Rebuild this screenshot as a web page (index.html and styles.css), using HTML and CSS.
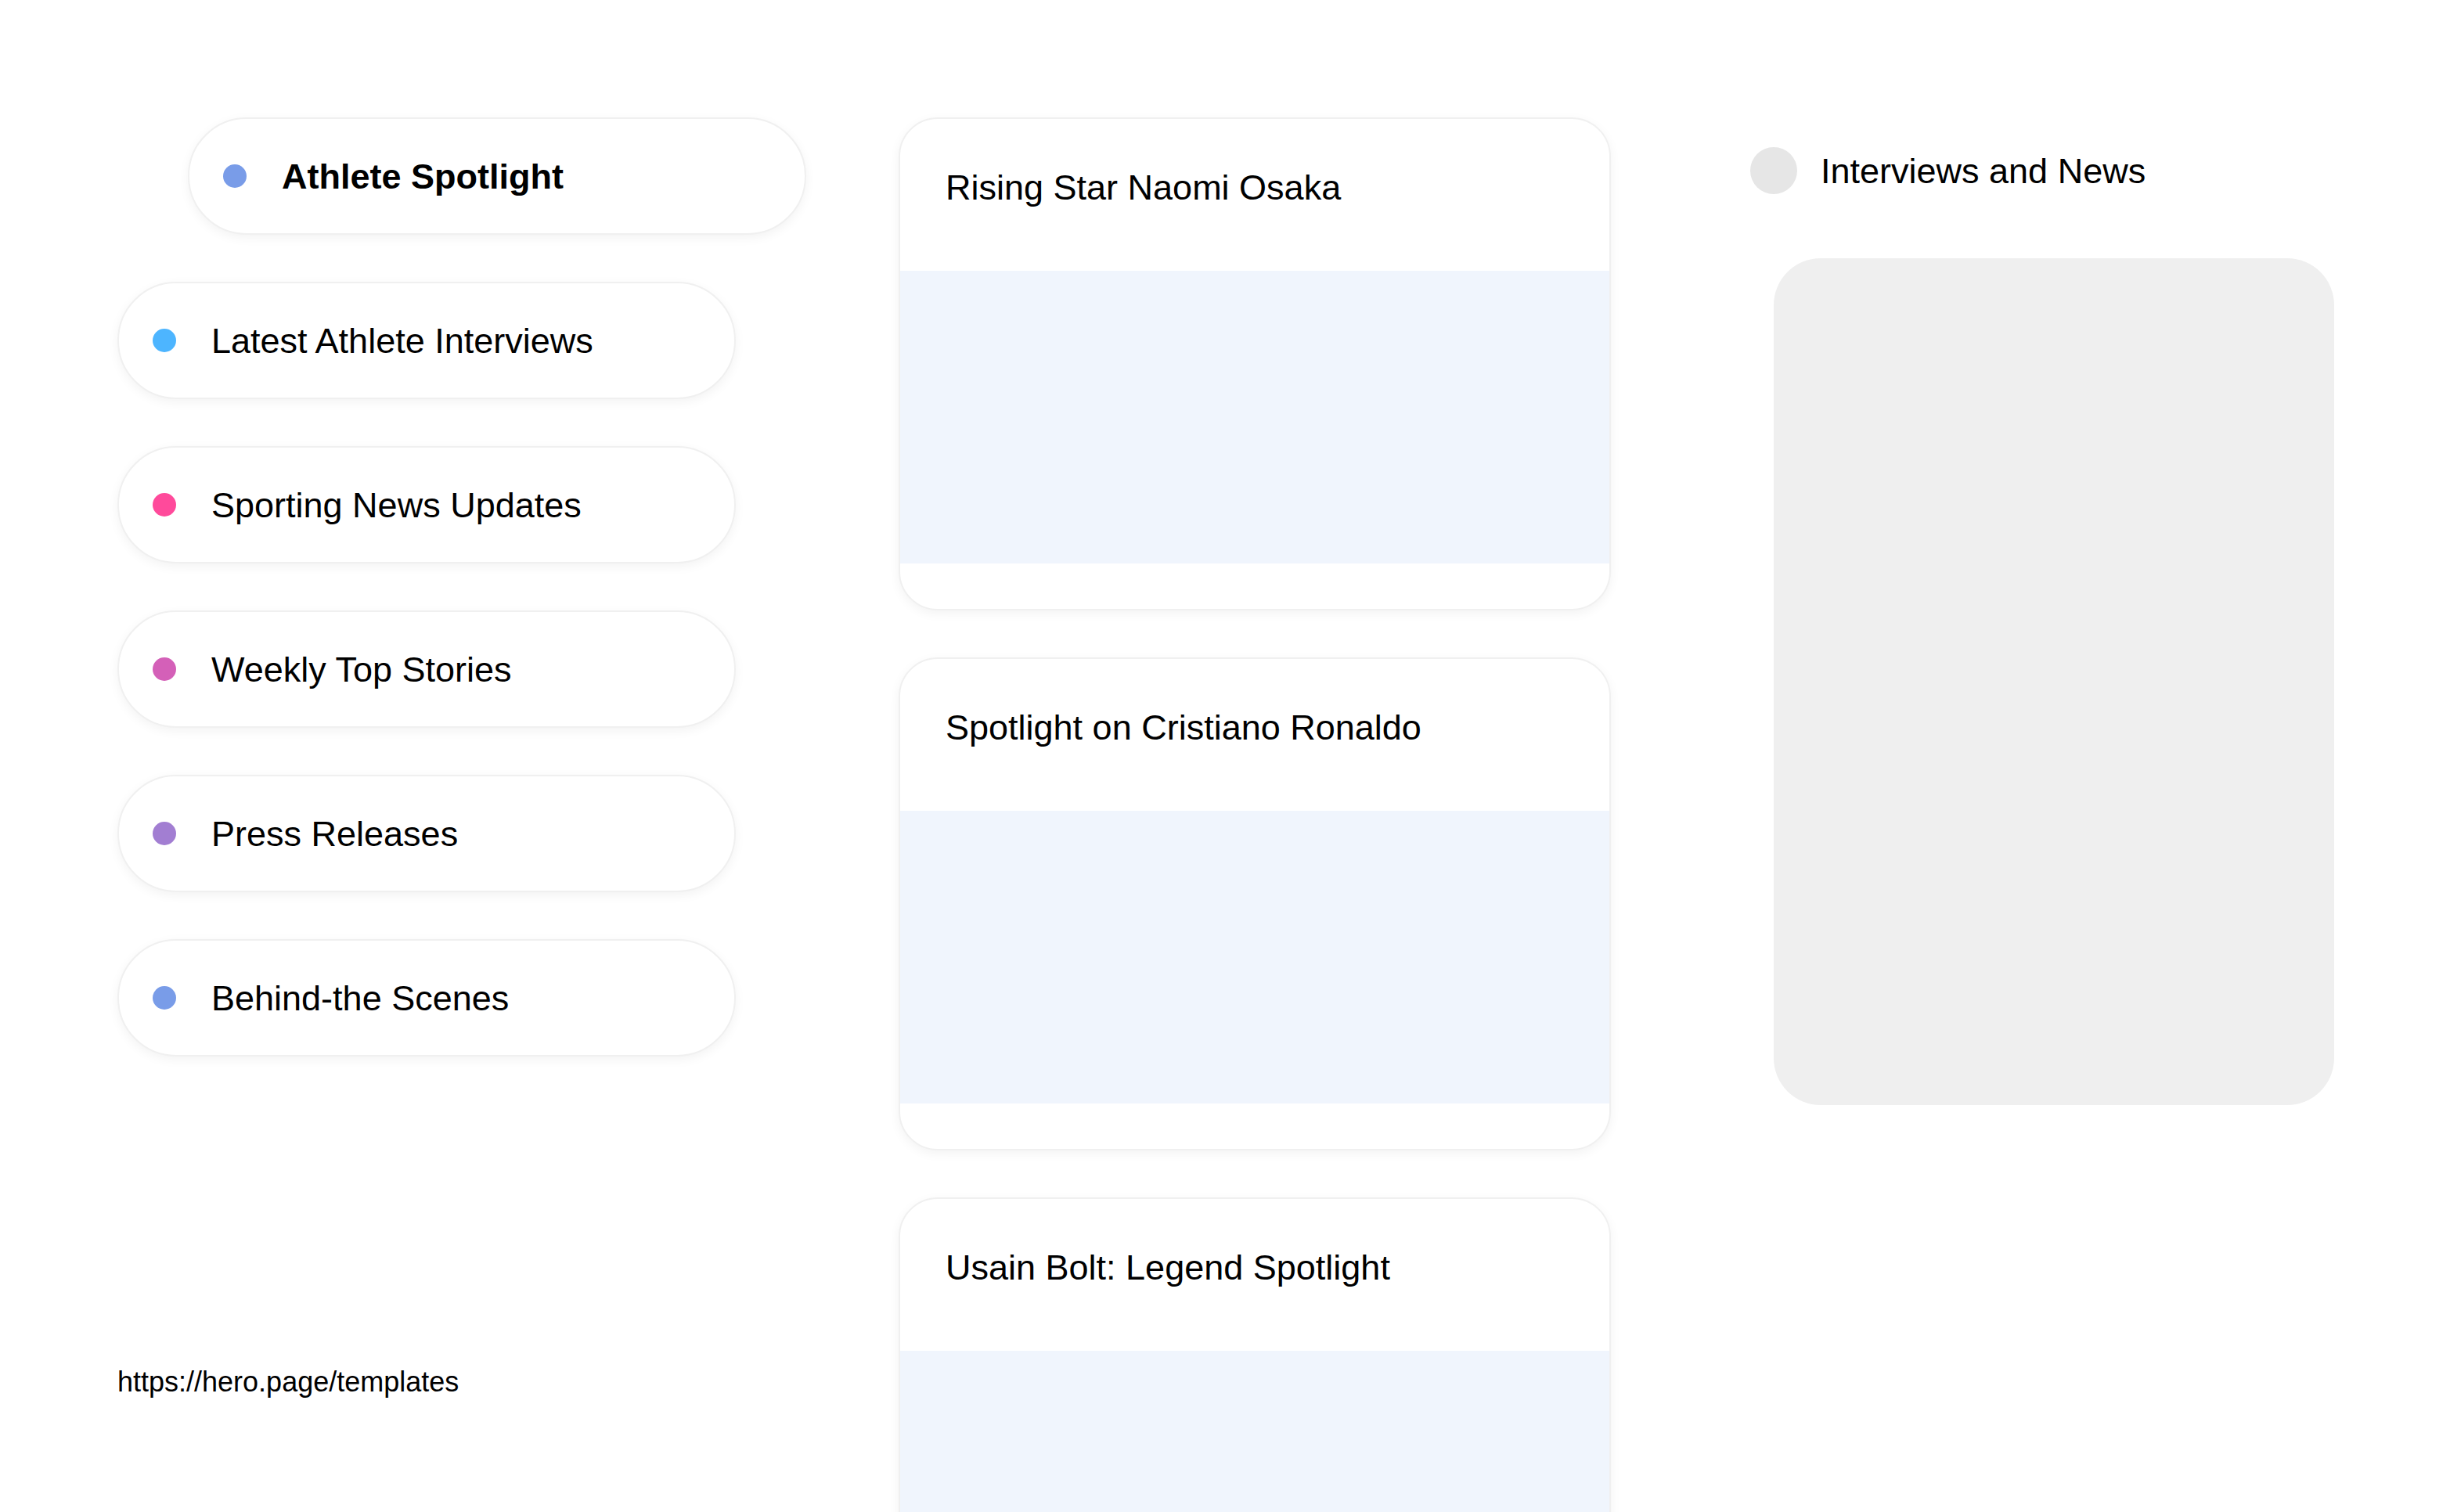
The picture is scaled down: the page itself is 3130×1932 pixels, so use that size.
FILE: index.html
```html
<!DOCTYPE html>
<html lang="en">
<head>
<meta charset="utf-8">
<title>Athlete Spotlight</title>
<link rel="stylesheet" href="styles.css">
</head>
<body>
<div class="page">
  <aside class="nav-col">
    <div class="nav-list">
      <div class="pill pill-featured"><span class="dot dot-blue"></span><span class="pill-label">Athlete Spotlight</span></div>
      <div class="pill"><span class="dot dot-sky"></span><span class="pill-label">Latest Athlete Interviews</span></div>
      <div class="pill"><span class="dot dot-pink"></span><span class="pill-label">Sporting News Updates</span></div>
      <div class="pill"><span class="dot dot-magenta"></span><span class="pill-label">Weekly Top Stories</span></div>
      <div class="pill"><span class="dot dot-purple"></span><span class="pill-label">Press Releases</span></div>
      <div class="pill"><span class="dot dot-blue"></span><span class="pill-label">Behind-the Scenes</span></div>
    </div>
    <div class="footer-link">https://hero.page/templates</div>
  </aside>
  <main class="card-col">
    <section class="card">
      <h2 class="card-title">Rising Star Naomi Osaka</h2>
      <div class="card-media"></div>
    </section>
    <section class="card">
      <h2 class="card-title">Spotlight on Cristiano Ronaldo</h2>
      <div class="card-media"></div>
    </section>
    <section class="card">
      <h2 class="card-title">Usain Bolt: Legend Spotlight</h2>
      <div class="card-media"></div>
    </section>
  </main>
  <aside class="side-col">
    <div class="side-header"><span class="side-avatar"></span><span class="side-title">Interviews and News</span></div>
    <div class="side-box"></div>
  </aside>
</div>
</body>
</html>
```

FILE: styles.css
```css
html, body {
  margin: 0;
  padding: 0;
  background: #ffffff;
  overflow: hidden;
}
body {
  font-family: "Liberation Sans", Arial, sans-serif;
  color: #000;
  width: 3130px;
  height: 1932px;
}
.page {
  display: flex;
  align-items: flex-start;
  padding: 150px 0 0 150px;
  box-sizing: border-box;
  height: 1932px;
}
.nav-col {
  width: 880px;
  flex: none;
  display: flex;
  flex-direction: column;
  height: 1782px;
}
.nav-list {
  display: flex;
  flex-direction: column;
  gap: 60px;
}
.pill {
  width: 790px;
  height: 150px;
  box-sizing: border-box;
  border-radius: 75px;
  background: #fff;
  border: 2px solid #f0f0f0;
  box-shadow: 0 4px 14px rgba(0, 0, 0, 0.05);
  display: flex;
  align-items: center;
  padding-left: 43px;
}
.pill-featured {
  margin-left: 90px;
}
.pill-featured .pill-label {
  font-weight: bold;
}
.dot {
  width: 30px;
  height: 30px;
  border-radius: 50%;
  flex: none;
  margin-right: 45px;
}
.dot-blue { background: #799ce8; }
.dot-sky { background: #4db5ff; }
.dot-pink { background: #ff4a9b; }
.dot-magenta { background: #d460b8; }
.dot-purple { background: #a27ed2; }
.pill-label {
  font-size: 45px;
  line-height: 1;
  color: #000;
}
.footer-link {
  font-size: 36px;
  line-height: 1;
  margin-top: 398px;
  color: #000;
}
.card-col {
  width: 910px;
  flex: none;
  margin-left: 118px;
  display: flex;
  flex-direction: column;
  gap: 60px;
}
.card {
  box-sizing: border-box;
  width: 910px;
  background: #fff;
  border-radius: 50px;
  border: 2px solid #f0f0f0;
  box-shadow: 0 4px 14px rgba(0, 0, 0, 0.05);
  overflow: hidden;
  padding-bottom: 58px;
  flex: none;
}
.card-title {
  margin: 0;
  font-size: 45px;
  font-weight: normal;
  line-height: 60px;
  padding: 58px 58px 76px;
}
.card-media {
  height: 374px;
  background: #f0f5fd;
}
.side-col {
  margin-left: 178px;
  width: 746px;
  flex: none;
  display: flex;
  flex-direction: column;
}
.side-header {
  display: flex;
  align-items: center;
  height: 60px;
  margin-top: 38px;
}
.side-avatar {
  width: 60px;
  height: 60px;
  border-radius: 50%;
  background: #e6e6e6;
  flex: none;
  margin-right: 30px;
}
.side-title {
  font-size: 45px;
  line-height: 1;
  color: #000;
}
.side-box {
  margin-top: 82px;
  margin-left: 30px;
  width: 716px;
  height: 1082px;
  border-radius: 60px;
  background: #efefef;
}
```
